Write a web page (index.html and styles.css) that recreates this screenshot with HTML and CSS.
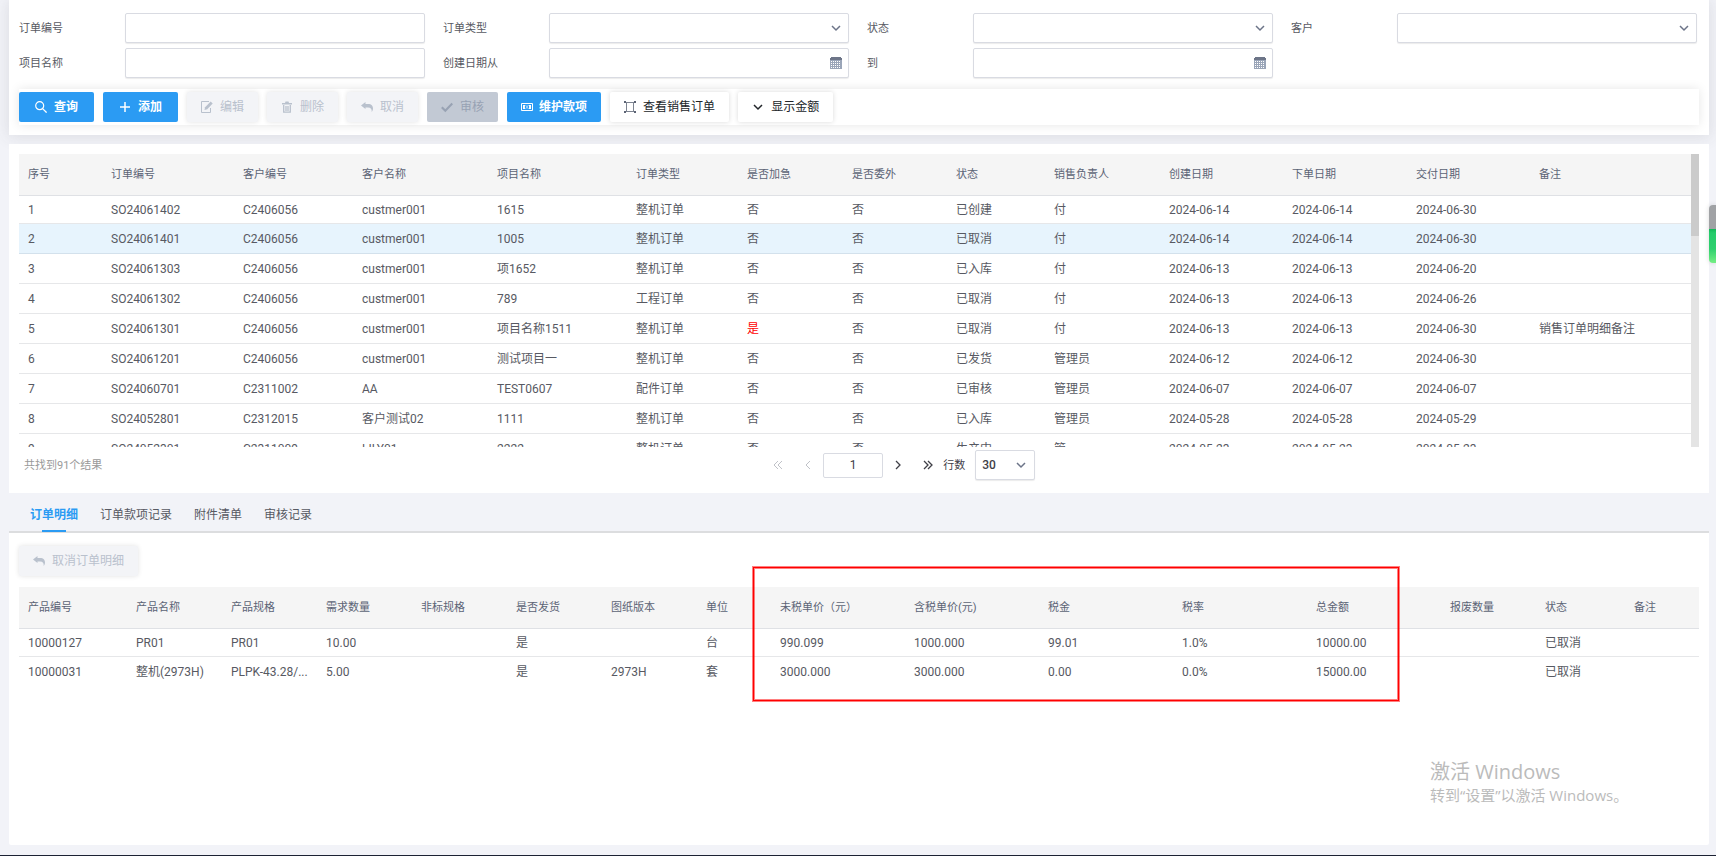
FILE: index.html
```html
<!DOCTYPE html>
<html lang="zh-CN">
<head>
  <meta charset="UTF-8">
  <meta name="viewport" content="width=device-width, initial-scale=1.0">
  <title>销售订单</title>
  <link rel="stylesheet" href="styles.css">
</head>
<body>
  <!-- Icons -->
  <svg class="icon-defs" aria-hidden="true">
    <symbol id="chevron" viewBox="0 0 12 12"><path d="M2 4l4 4 4-4" fill="none" stroke="currentColor" stroke-width="1.5"/></symbol>
    <symbol id="calendar" viewBox="0 0 12 12">
      <path d="M0 1h1V0h10v1h1v11H0z" fill="#9aa5b8"/>
      <path d="M0 1h1V0h10v1h1v2H0z" fill="#6d7588"/>
      <path d="M1 4.500h10M1 6.500h10M1 8.500h10M1 10.500h10" stroke="#fff" stroke-dasharray="1 1"/>
    </symbol>
    <symbol id="reply" viewBox="0 0 12 12"><path d="M0 4.500L4.500 1v2H7c3.500 0 5 2 5 4.500 0 1.500-.6 2.700-1.300 3.500.3-2.800-.8-4.500-3.700-4.500H4.500V8z" fill="currentColor"/></symbol>
  </svg>

  <!-- Search form -->
  <section class="panel search-panel">
    <form class="search-form">
      <div class="field">
        <label for="order-no">订单编号</label>
        <div class="control"><input type="text" id="order-no"></div>
      </div>
      <div class="field">
        <label for="order-type">订单类型</label>
        <div class="control">
          <select id="order-type"><option></option></select>
          <svg class="control-icon"><use href="#chevron"/></svg>
        </div>
      </div>
      <div class="field">
        <label for="status">状态</label>
        <div class="control">
          <select id="status"><option></option></select>
          <svg class="control-icon"><use href="#chevron"/></svg>
        </div>
      </div>
      <div class="field">
        <label for="customer">客户</label>
        <div class="control">
          <select id="customer"><option></option></select>
          <svg class="control-icon"><use href="#chevron"/></svg>
        </div>
      </div>
      <div class="field">
        <label for="project-name">项目名称</label>
        <div class="control"><input type="text" id="project-name"></div>
      </div>
      <div class="field">
        <label for="date-from">创建日期从</label>
        <div class="control">
          <input type="text" id="date-from">
          <svg class="control-icon"><use href="#calendar"/></svg>
        </div>
      </div>
      <div class="field">
        <label for="date-to">到</label>
        <div class="control">
          <input type="text" id="date-to">
          <svg class="control-icon"><use href="#calendar"/></svg>
        </div>
      </div>
    </form>

    <div class="toolbar">
      <button type="button" class="btn btn-primary">
        <svg viewBox="0 0 12 12"><circle cx="4.700" cy="4.700" r="4" fill="none" stroke="currentColor" stroke-width="1.200"/><path d="M7.600 7.600l4 4" stroke="currentColor" stroke-width="1.300"/></svg>查询
      </button>
      <button type="button" class="btn btn-primary">
        <svg viewBox="0 0 12 12"><path d="M6 1v10M1 6h10" stroke="currentColor" stroke-width="1.500"/></svg>添加
      </button>
      <button type="button" class="btn btn-light" disabled>
        <svg viewBox="0 0 12 12"><path d="M8 .5H.5v11h9V7" fill="none" stroke="currentColor"/><path d="M3.500 9l.6-2.800L9.700.6l2 2L6.200 8.200z" fill="currentColor"/></svg>编辑
      </button>
      <button type="button" class="btn btn-light" disabled>
        <svg viewBox="0 0 12 12"><path d="M1 2h3l.5-1.500h3L8 2h3v1.500H1z" fill="currentColor"/><path d="M2.700 4v7.200h6.600V4M5 5v5M7 5v5" fill="none" stroke="currentColor" stroke-width="1.300"/></svg>删除
      </button>
      <button type="button" class="btn btn-light" disabled>
        <svg><use href="#reply"/></svg>取消
      </button>
      <button type="button" class="btn btn-audit" disabled>
        <svg viewBox="0 0 12 12"><path d="M.8 6.200l3.500 3.500 7-7.200" fill="none" stroke="currentColor" stroke-width="2.200"/></svg>审核
      </button>
      <button type="button" class="btn btn-primary btn-wide">
        <svg viewBox="0 0 12 12"><path d="M.5 2.500h11v7H.5z" fill="none" stroke="currentColor"/><path d="M2 4h2.700C3.500 5.200 3.500 6.800 4.700 8H2zM10 4H7.300c1.200 1.200 1.200 2.800 0 4H10z" fill="currentColor"/><path d="M6 4.500v3" stroke="currentColor"/></svg>维护款项
      </button>
      <button type="button" class="btn btn-default">
        <svg class="icon-soft" viewBox="0 0 12 12"><path d="M2 1.500h8M2 10.500h8M2.500 2v8M9.500 2v8" fill="none" stroke="currentColor" stroke-width=".8"/><path d="M0 0h2v2H0zM10 0h2v2h-2zM0 10h2v2H0zM10 10h2v2h-2z" fill="currentColor"/></svg>查看销售订单
      </button>
      <button type="button" class="btn btn-default">
        <svg><use href="#chevron"/></svg>显示金额
      </button>
    </div>
  </section>

  <!-- Order list -->
  <section class="panel list-panel">
    <div class="list-scroll">
      <div class="list-view">
        <table class="data-table orders">
          <colgroup>
            <col><col><col><col><col><col><col><col><col><col><col><col><col><col>
          </colgroup>
          <thead>
            <tr><th>序号</th><th>订单编号</th><th>客户编号</th><th>客户名称</th><th>项目名称</th><th>订单类型</th><th>是否加急</th><th>是否委外</th><th>状态</th><th>销售负责人</th><th>创建日期</th><th>下单日期</th><th>交付日期</th><th>备注</th></tr>
          </thead>
          <tbody>
            <tr><td>1</td><td>SO24061402</td><td>C2406056</td><td>custmer001</td><td>1615</td><td>整机订单</td><td>否</td><td>否</td><td>已创建</td><td>付</td><td>2024-06-14</td><td>2024-06-14</td><td>2024-06-30</td><td></td></tr>
            <tr class="selected"><td>2</td><td>SO24061401</td><td>C2406056</td><td>custmer001</td><td>1005</td><td>整机订单</td><td>否</td><td>否</td><td>已取消</td><td>付</td><td>2024-06-14</td><td>2024-06-14</td><td>2024-06-30</td><td></td></tr>
            <tr><td>3</td><td>SO24061303</td><td>C2406056</td><td>custmer001</td><td>项1652</td><td>整机订单</td><td>否</td><td>否</td><td>已入库</td><td>付</td><td>2024-06-13</td><td>2024-06-13</td><td>2024-06-20</td><td></td></tr>
            <tr><td>4</td><td>SO24061302</td><td>C2406056</td><td>custmer001</td><td>789</td><td>工程订单</td><td>否</td><td>否</td><td>已取消</td><td>付</td><td>2024-06-13</td><td>2024-06-13</td><td>2024-06-26</td><td></td></tr>
            <tr><td>5</td><td>SO24061301</td><td>C2406056</td><td>custmer001</td><td>项目名称1511</td><td>整机订单</td><td class="urgent">是</td><td>否</td><td>已取消</td><td>付</td><td>2024-06-13</td><td>2024-06-13</td><td>2024-06-30</td><td>销售订单明细备注</td></tr>
            <tr><td>6</td><td>SO24061201</td><td>C2406056</td><td>custmer001</td><td>测试项目一</td><td>整机订单</td><td>否</td><td>否</td><td>已发货</td><td>管理员</td><td>2024-06-12</td><td>2024-06-12</td><td>2024-06-30</td><td></td></tr>
            <tr><td>7</td><td>SO24060701</td><td>C2311002</td><td>AA</td><td>TEST0607</td><td>配件订单</td><td>否</td><td>否</td><td>已审核</td><td>管理员</td><td>2024-06-07</td><td>2024-06-07</td><td>2024-06-07</td><td></td></tr>
            <tr><td>8</td><td>SO24052801</td><td>C2312015</td><td>客户测试02</td><td>1111</td><td>整机订单</td><td>否</td><td>否</td><td>已入库</td><td>管理员</td><td>2024-05-28</td><td>2024-05-28</td><td>2024-05-29</td><td></td></tr>
            <tr><td>9</td><td>SO24052301</td><td>C2311009</td><td>LILY01</td><td>2222</td><td>整机订单</td><td>否</td><td>否</td><td>生产中</td><td>管</td><td>2024-05-23</td><td>2024-05-23</td><td>2024-05-23</td><td></td></tr>
          </tbody>
        </table>
      </div>
      <div class="scroll-track"><div class="scroll-thumb"></div></div>
    </div>

    <div class="list-footer">
      <span class="total">共找到91个结果</span>
      <div class="pager">
        <button type="button" aria-label="首页" disabled><svg viewBox="0 0 10 10"><path d="M5 1L1 5l4 4M9 1L5 5l4 4" fill="none" stroke="currentColor"/></svg></button>
        <button type="button" aria-label="上一页" disabled><svg viewBox="0 0 10 10"><path d="M7 1L3 5l4 4" fill="none" stroke="currentColor"/></svg></button>
        <input type="text" class="page-no" value="1" aria-label="页码">
        <button type="button" aria-label="下一页"><svg viewBox="0 0 10 10"><path d="M3 1l4 4-4 4" fill="none" stroke="currentColor" stroke-width="1.300"/></svg></button>
        <button type="button" aria-label="末页"><svg viewBox="0 0 10 10"><path d="M1 1l4 4-4 4M5 1l4 4-4 4" fill="none" stroke="currentColor" stroke-width="1.300"/></svg></button>
        <label for="page-size">行数</label>
        <div class="control page-size">
          <select id="page-size"><option>30</option></select>
          <svg class="control-icon"><use href="#chevron"/></svg>
        </div>
      </div>
    </div>
  </section>

  <!-- Detail tabs -->
  <nav class="tabs">
    <a href="#detail" class="active">订单明细</a>
    <a href="#payment">订单款项记录</a>
    <a href="#attachment">附件清单</a>
    <a href="#audit">审核记录</a>
  </nav>

  <section class="panel detail-panel" id="detail">
    <button type="button" class="btn btn-light" disabled>
      <svg><use href="#reply"/></svg>取消订单明细
    </button>
    <table class="data-table details">
      <colgroup>
        <col><col><col><col><col><col><col><col><col><col><col><col><col><col><col><col>
      </colgroup>
      <thead>
        <tr><th>产品编号</th><th>产品名称</th><th>产品规格</th><th>需求数量</th><th>非标规格</th><th>是否发货</th><th>图纸版本</th><th>单位</th><th>未税单价（元）</th><th>含税单价(元)</th><th>税金</th><th>税率</th><th>总金额</th><th>报废数量</th><th>状态</th><th>备注</th></tr>
      </thead>
      <tbody>
        <tr><td>10000127</td><td>PR01</td><td>PR01</td><td>10.00</td><td></td><td>是</td><td></td><td>台</td><td>990.099</td><td>1000.000</td><td>99.01</td><td>1.0%</td><td>10000.00</td><td></td><td>已取消</td><td></td></tr>
        <tr><td>10000031</td><td>整机(2973H)</td><td>PLPK-43.28/...</td><td>5.00</td><td></td><td>是</td><td>2973H</td><td>套</td><td>3000.000</td><td>3000.000</td><td>0.00</td><td>0.0%</td><td>15000.00</td><td></td><td>已取消</td><td></td></tr>
      </tbody>
    </table>
    <div class="price-mark"></div>
  </section>

  <div class="activate">
    <p class="activate-title">激活 Windows</p>
    <p class="activate-text">转到“设置”以激活 Windows。</p>
  </div>
  <div class="side-widget"></div>
</body>
</html>
```
FILE: styles.css
```css
* {
  box-sizing: border-box;
}

body {
  display: flex;
  flex-direction: column;
  min-height: 100vh;
  margin: 0;
  padding: 0 7px 10px 9px;
  border-bottom: 1px solid #1c2233;
  background-color: #f2f3f8;
  color: #575962;
  font-family: Roboto, "Noto Sans CJK SC", sans-serif;
  font-size: 12px;
  line-height: 18px;
  position: relative;
}

button,
input,
select {
  font: inherit;
  color: inherit;
}

.icon-defs {
  display: none;
}

.panel {
  background-color: #fff;
  padding: 10px;
}

.search-panel {
  padding-top: 13px;
  box-shadow: 0 1px 15px 1px rgba(69, 65, 78, 0.12);
}

/* Search form */
.search-form {
  display: grid;
  grid-template-columns: repeat(4, 1fr);
  gap: 5px 18px;
  padding-right: 2px;
  margin-bottom: 11px;
}

.field {
  display: flex;
  align-items: center;
}

.field label {
  width: 106px;
  padding-top: 2px;
  font-size: 11px;
}

.control {
  flex: 1;
  position: relative;
  display: flex;
}

.control input,
.control select {
  width: 100%;
  height: 30px;
  padding: 0 6px;
  border: 1px solid #d9dbe2;
  border-radius: 2px;
  background-color: #fff;
  box-shadow: 0 1px 1px rgba(0, 0, 0, 0.08);
  appearance: none;
}

.control-icon {
  position: absolute;
  right: 7px;
  top: 9px;
  width: 12px;
  height: 12px;
  color: #6c7488;
  pointer-events: none;
}

/* Toolbar */
.toolbar {
  display: flex;
  gap: 9px;
  padding: 3px 0;
  box-shadow: 0 0 10px rgba(0, 0, 0, 0.1);
}

.btn {
  display: inline-flex;
  align-items: center;
  justify-content: center;
  gap: 7px;
  height: 30px;
  padding: 0 14px;
  border: none;
  border-radius: 2px;
}

.btn svg {
  width: 12px;
  height: 12px;
}

.btn .icon-soft {
  color: #5c6475;
}

.btn-primary {
  padding: 0 16px;
  background-color: #2b9bf3;
  color: #fff;
  font-weight: 600;
}

.btn-wide {
  gap: 6px;
  padding: 0 14px;
}

.btn-light {
  background-color: #f3f4f7;
  color: #b9c1cd;
  box-shadow: 0 0 5px rgba(0, 0, 0, 0.12);
}

.btn-audit {
  background-color: #c2c9d4;
  color: #98a2b3;
}

.btn-default {
  background-color: #fff;
  color: #212529;
  box-shadow: 0 0 5px rgba(0, 0, 0, 0.15);
}

/* Tables */
.data-table {
  width: 100%;
  border-collapse: separate;
  border-spacing: 0;
  table-layout: fixed;
}

.data-table th,
.data-table td {
  height: 30px;
  padding: 0 9px;
  border-bottom: 1px solid #e6e7e9;
  text-align: left;
  white-space: nowrap;
}

.data-table th {
  height: 42px;
  background-color: #f5f5f5;
  border-color: #dfe1e5;
  color: #5c6475;
  font-size: 11px;
  font-weight: 400;
}

.data-table tbody tr:first-child td {
  height: 28px;
}

.data-table .selected td {
  background-color: #e7f4fd;
  border-color: #d3e1ec;
}

.data-table .urgent {
  color: #f00;
}

.orders col:nth-child(1) { width: 83px; }
.orders col:nth-child(2) { width: 132px; }
.orders col:nth-child(3) { width: 119px; }
.orders col:nth-child(4) { width: 135px; }
.orders col:nth-child(5) { width: 139px; }
.orders col:nth-child(6) { width: 111px; }
.orders col:nth-child(7) { width: 105px; }
.orders col:nth-child(8) { width: 104px; }
.orders col:nth-child(9) { width: 98px; }
.orders col:nth-child(10) { width: 115px; }
.orders col:nth-child(11) { width: 123px; }
.orders col:nth-child(12) { width: 124px; }
.orders col:nth-child(13) { width: 123px; }
.orders col:nth-child(14) { width: 161px; }

.details col { width: 95px; }
.details col:nth-child(1) { width: 108px; }
.details col:nth-child(8) { width: 74px; }
.details col:nth-child(n + 9):nth-child(-n + 13) { width: 134px; }
.details col:nth-child(15) { width: 89px; }
.details col:nth-child(16) { width: 74px; }

.details tbody tr:last-child td {
  border-bottom: none;
}

/* Order list */
.list-panel {
  margin-top: 9px;
  padding-bottom: 13px;
}

.list-scroll {
  display: flex;
  height: 293px;
}

.list-view {
  flex: 1;
  overflow: hidden;
}

.scroll-track {
  width: 8px;
  background-color: #e4e4e4;
}

.scroll-thumb {
  height: 28%;
  background-color: #cbcbcb;
}

.list-footer {
  display: flex;
  align-items: center;
  padding-top: 3px;
}

.total {
  width: 44%;
  padding: 2px 0 0 5px;
  color: #999;
  font-size: 11px;
}

.pager {
  display: flex;
  align-items: center;
  padding-left: 5px;
  color: #3f4047;
}

.pager button {
  display: flex;
  justify-content: center;
  width: 30px;
  padding: 0;
  border: none;
  background: none;
}

.pager button:disabled {
  color: #c0c2c8;
}

.pager svg {
  width: 10px;
  height: 10px;
}

.page-no {
  width: 60px;
  height: 25px;
  padding: 0;
  border: 1px solid #d9dbe2;
  border-radius: 2px;
  text-align: center;
}

.pager label {
  padding-top: 1px;
  font-size: 11px;
}

.page-size {
  flex: none;
  width: 60px;
  margin-left: 10px;
  font-weight: 500;
}

.pager .control-icon {
  right: 8px;
  width: 12px;
  height: 12px;
}

/* Detail tabs */
.tabs {
  display: flex;
  gap: 22px;
  height: 40px;
  padding: 4px 21px 0;
  border-bottom: 2px solid #dcdddf;
}

.tabs a {
  position: relative;
  line-height: 36px;
  color: #575962;
  text-decoration: none;
}

.tabs .active {
  color: #2b9bf3;
  font-weight: 700;
}

.tabs .active::after {
  content: "";
  position: absolute;
  left: calc(50% - 12px);
  bottom: -1px;
  width: 24px;
  height: 2px;
  background-color: #2b9bf3;
}

.detail-panel {
  flex: 1;
  position: relative;
  padding-top: 13px;
  border-radius: 0 0 2px 2px;
}

.details {
  margin-top: 11px;
}

/* Frame over the price columns */
.price-mark {
  position: absolute;
  left: 744px;
  top: 34px;
  width: 646px;
  height: 134px;
  border: 1px solid #f00;
  box-shadow: 0 0 0 1px rgba(255, 0, 0, 0.5), inset 0 0 0 1px rgba(255, 0, 0, 0.5);
}

.activate {
  position: absolute;
  left: 1430px;
  bottom: 49px;
  color: #bbb;
  font-family: "Open Sans", "Noto Sans CJK SC", sans-serif;
}

.activate p {
  margin: 0;
}

.activate-title {
  font-size: 20px;
  line-height: 25px;
}

.activate-text {
  font-size: 15px;
  line-height: 22px;
}

.side-widget {
  position: absolute;
  right: 0;
  top: 205px;
  width: 7px;
  height: 58px;
  border-radius: 4px 0 0 4px;
  background: linear-gradient(#a0a2a5 24px, #12b858 24px, #25cb6b 28px, #2fd06e 44px, #74ee84);
  box-shadow: 0 0 5px rgba(0, 0, 0, 0.15);
}
```
